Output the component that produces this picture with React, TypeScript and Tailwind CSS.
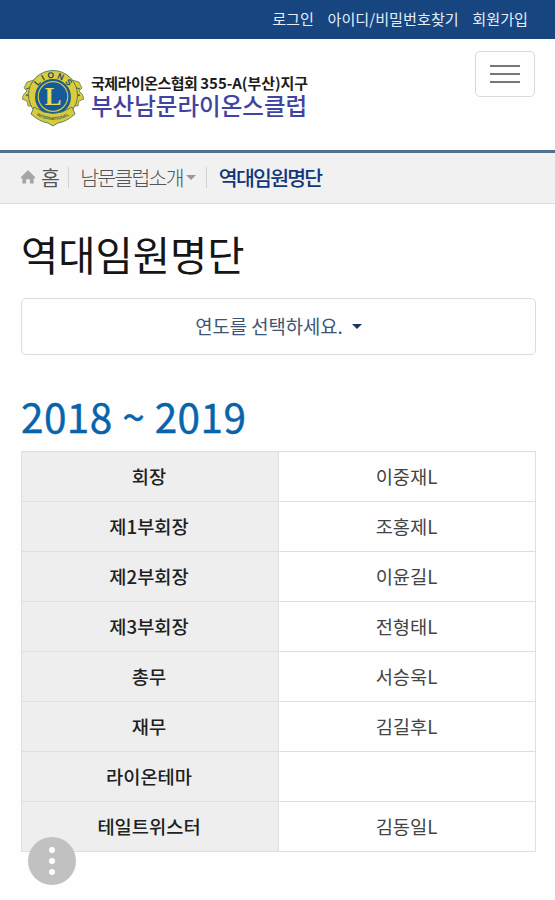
const officers = [
  { role: "회장", name: "이중재L" },
  { role: "제1부회장", name: "조홍제L" },
  { role: "제2부회장", name: "이윤길L" },
  { role: "제3부회장", name: "전형태L" },
  { role: "총무", name: "서승욱L" },
  { role: "재무", name: "김길후L" },
  { role: "라이온테마", name: "" },
  { role: "테일트위스터", name: "김동일L" },
];

function Emblem() {
  return (
    <svg viewBox="0 0 62 58" className="h-[58px] w-[62px] shrink-0">
      {/* Lion heads */}
      <path
        d="M12 11 L5 13 L2 19 L5 22 L2 25 L0 30 L5 32 L6 37 L12 37 L50 37 L56 37 L57 32 L62 30 L60 25 L57 22 L60 19 L57 13 L50 11 Z"
        fill="#d9ca3a"
        stroke="#4a7358"
        strokeWidth="0.7"
      />
      <path
        d="M4 20 L10 18 M4 26 L9 27 M58 20 L52 18 M58 26 L53 27"
        stroke="#3d6a62"
        strokeWidth="1.3"
      />
      <circle cx="31" cy="26" r="24.5" fill="#dccb3c" stroke="#38665f" strokeWidth="0.8" />
      <circle cx="31" cy="28" r="18" fill="#1a5c8f" />
      <circle cx="31" cy="27.5" r="14.8" fill="#155b9c" stroke="#cfc54a" strokeWidth="1.2" />
      {/* Ribbon */}
      <path
        d="M12 38 Q31 51 50 38 L53 45 Q44 53 36 54 L31 57 L26 54 Q18 53 9 45 Z"
        fill="#d8ca3d"
        stroke="#3f6b62"
        strokeWidth="0.8"
      />
      <path id="lions-arc" d="M13 27 A18 18 0 0 1 49 27" fill="none" />
      <text fill="#1b4f69" className="font-['Liberation_Sans'] text-[8.5px] font-bold" textAnchor="middle">
        <textPath href="#lions-arc" startOffset="50%" textLength="36">
          LIONS
        </textPath>
      </text>
      <text x="31" y="36" textAnchor="middle" fill="#eadb50" className="font-['Liberation_Serif'] text-[25px] font-bold">
        L
      </text>
      <path id="ribbon-arc" d="M13 45.5 Q31 56.5 49 45.5" fill="none" />
      <text fill="#3c6455" className="font-['Liberation_Sans'] text-[4.3px] font-bold" textAnchor="middle">
        <textPath href="#ribbon-arc" startOffset="50%">
          INTERNATIONAL
        </textPath>
      </text>
    </svg>
  );
}

function App() {
  return (
    <div className="relative h-[900px] w-full overflow-hidden bg-[#fefefe] font-['Noto_Sans_CJK_KR',sans-serif] text-[#333]">
      {/* Top links */}
      <nav className="flex h-[39px] justify-end gap-[13.5px] bg-[#16457f] pr-[27px] text-[15.15px] leading-[36px] text-[#e4edf7]">
        <a>로그인</a>
        <a>아이디/비밀번호찾기</a>
        <a>회원가입</a>
      </nav>

      {/* Header */}
      <header className="flex h-[114px] items-start justify-between border-b-[3px] border-[#50708f] pl-[22px] pr-5">
        <div className="flex pt-[30px]">
          <Emblem />
          <div className="pl-[7px] pt-[2px] whitespace-nowrap">
            <p className="text-[15px] leading-[23px] font-bold tracking-[-0.5px] text-[#1c1c1c]">
              국제라이온스협회 <span className="tracking-[-0.05px]">355-A(부산)지구</span>
            </p>
            <p className="text-[23.5px] leading-[23px] font-medium text-[#4143a0]">
              부산남문라이온스클럽
            </p>
          </div>
        </div>
        <button className="mt-[12px] flex h-[46px] w-[60px] flex-col items-center justify-center gap-[6px] rounded-[5px] border border-[#d9d9d9]">
          <span className="h-[2px] w-[30px] bg-[#777]" />
          <span className="h-[2px] w-[30px] bg-[#777]" />
          <span className="h-[2px] w-[30px] bg-[#777]" />
        </button>
      </header>

      {/* Breadcrumb */}
      <div className="flex h-[51px] items-center border-b border-[#dcdcdc] bg-[#f1f1f1] pb-[2px] pl-[20px] text-[20.5px] tracking-[-1.75px] whitespace-nowrap">
        <svg viewBox="0 0 16 15" className="h-[14px] w-4 fill-[#a5a5a5]">
          <path d="M8 0 L16 8 L14.5 9.3 L14 8.9 V14.5 H10 V10 H6 V14.5 H2 V8.9 L1.5 9.3 L0 8 Z" />
        </svg>
        <span className="ml-[5px] text-[#555]">홈</span>
        <span className="ml-[10px] h-[21px] w-px bg-[#d3d3d3]" />
        <span className="ml-[11px] font-light text-[#555]">남문클럽소개</span>
        <span className="ml-[3px] border-x-[5px] border-t-[5px] border-x-transparent border-t-[#999]" />
        <span className="ml-[10px] h-[21px] w-px bg-[#d3d3d3]" />
        <span className="ml-[12px] font-medium text-[#12367a]">역대임원명단</span>
      </div>

      <main className="pl-[21px] pr-[19px]">
        <h1 className="mt-[21px] text-[40.5px] leading-[58px] text-[#151515]">역대임원명단</h1>

        <button className="mt-[15px] flex h-[57px] w-full items-center justify-center gap-[9px] rounded-[5px] border border-[#dcdcdc] text-[18.8px] text-[#3d5575]">
          연도를 선택하세요.
          <span className="border-x-[5px] border-t-[5px] border-x-transparent border-t-[#1d3467]" />
        </button>

        <h2 className="mt-[31px] text-[40.5px] leading-[60px] tracking-[0.45px] text-[#0864aa] [-webkit-text-stroke:0.4px_#0864aa]">
          2018 ~ 2019
        </h2>

        <table className="mt-[5px] w-full table-fixed border-collapse text-center text-[18.7px] leading-[27px]">
          <tbody>
            {officers.map((officer) => (
              <tr key={officer.role} className="h-[50px]">
                <th className="border border-[#dfdfdf] bg-[#eee] pb-[2px] pr-[2px] font-medium text-[#202020]">{officer.role}</th>
                <td className="border border-[#dfdfdf] pb-[2px] pr-[1px] text-[#444]">{officer.name}</td>
              </tr>
            ))}
          </tbody>
        </table>
      </main>

      {/* Floating menu button */}
      <button className="absolute left-[28px] top-[837px] flex h-[48px] w-[48px] flex-col items-center justify-center gap-[5px] rounded-full bg-[#c1c1c1]">
        <span className="h-[6px] w-[6px] rounded-full bg-white" />
        <span className="h-[6px] w-[6px] rounded-full bg-white" />
        <span className="h-[6px] w-[6px] rounded-full bg-white" />
      </button>
    </div>
  );
}

export default App;
